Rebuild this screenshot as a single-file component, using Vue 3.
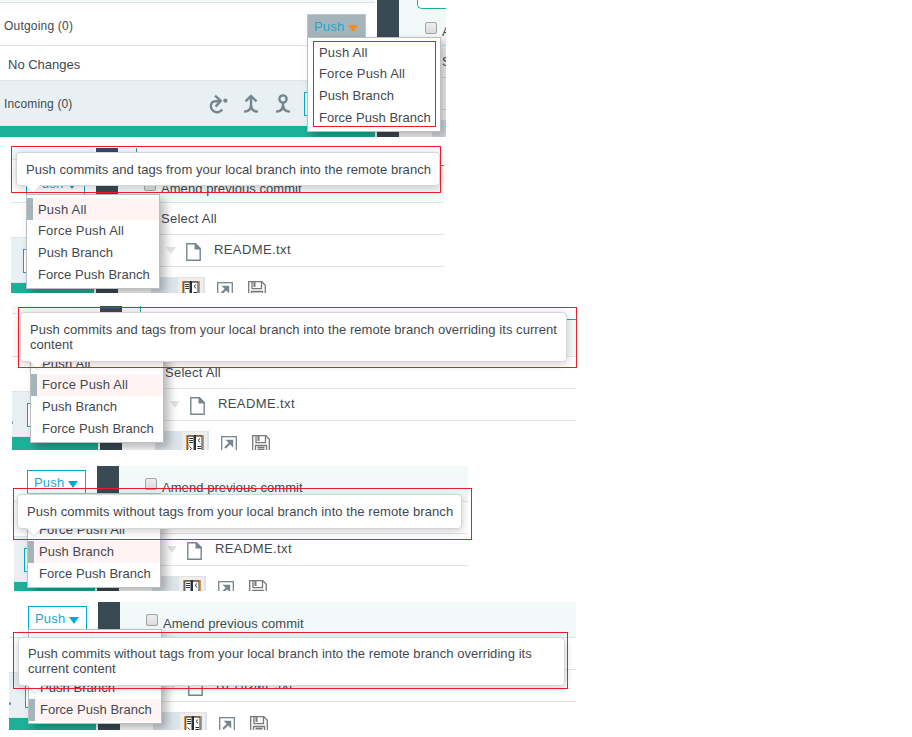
<script setup>
const items = ['Push All', 'Force Push All', 'Push Branch', 'Force Push Branch']
const panels = [
  { id: 1, active: -1, open: true, lines: [] },
  { id: 2, active: 0, lines: ['Push commits and tags from your local branch into the remote branch'] },
  { id: 3, active: 1, lines: ['Push commits and tags from your local branch into the remote branch overriding its current', 'content'] },
  { id: 4, active: 2, lines: ['Push commits without tags from your local branch into the remote branch'] },
  { id: 5, active: 3, lines: ['Push commits without tags from your local branch into the remote branch overriding its', 'current content'] },
]
</script>

<template>
  <main class="board">
    <section v-for="p in panels" :key="p.id" class="panel" :class="'p' + p.id">
      <div class="window">
        <div class="scene">
          <div class="left">
            <div class="strip"></div>
            <div class="row outgoing">
              <span class="small">Outgoing (0)</span>
              <button class="push" :class="{ open: p.open }"><span>Push</span><i class="caret"></i></button>
            </div>
            <div class="row none">No Changes</div>
            <div class="row incoming">
              <span class="small">Incoming (0)</span>
              <div class="tools">
                <svg width="20" height="20" viewBox="0 0 20 20" fill="none" stroke="#76868e" stroke-width="2.4"><path d="M14.2 15.4A6.1 6.1 0 1 1 3.8 8.8C5.6 6.6 9 7 13 7M7 1.6L12.8 6.8L7.6 12.6"/><circle cx="17.4" cy="6.7" r="2.1" fill="#76868e" stroke="none"/></svg>
                <svg width="16" height="20" viewBox="0 0 16 20" fill="none" stroke="#76868e" stroke-width="2.4"><path d="M8 2V12M8 10.5C8 15.5 6 17.6 1 17.6M8 10.5C8 15.5 10 17.6 15 17.6M2.5 7.4L8 2L13.5 7.4"/></svg>
                <svg width="16" height="20" viewBox="0 0 16 20" fill="none" stroke="#76868e" stroke-width="2.4"><circle cx="8" cy="5" r="3.6"/><path d="M8 8.5V12M8 10.5C8 15.5 6 17.6 1 17.6M8 10.5C8 15.5 10 17.6 15 17.6"/></svg>
              </div>
              <div class="pull"></div>
            </div>
            <div class="bar"></div>
          </div>
          <div class="splitter"></div>
          <div class="right">
            <div class="commit">
              <div class="message"></div>
              <label class="amend"><span class="check"></span><span>Amend previous commit</span></label>
            </div>
            <div class="line select">Select All</div>
            <div class="line file">
              <i class="twist"></i>
              <svg width="15" height="18" viewBox="0 0 15 18" fill="none" stroke="#76868e" stroke-width="1.4"><path d="M.8 .8H9.4L14.2 5.6V17.2H.8Z"/><path d="M9.2 .8V5.8H14.2Z" fill="#76868e"/></svg>
              <span>README.txt</span>
            </div>
            <div class="actions">
              <div class="mode">
                <div class="compare">
                  <svg width="18" height="18" viewBox="0 0 18 18" fill="none"><rect x=".7" y=".7" width="16.6" height="16.6" fill="#fff" stroke="#d9892e" stroke-width="1.2"/><path d="M1.8 17.5V1H8V17.5M10 1H16V17.5" stroke="#27313b" stroke-width="1"/><path d="M9 0V18" stroke="#27313b" stroke-width="2"/><path d="M3.2 3.5H7M3.2 5.5H7M3.2 7.5H7M11.4 11.5H15M11.4 13.5H15M11.4 15.5H15" stroke="#27313b" stroke-width="1"/><path d="M14.2 3.4L12 5.4L14.2 7.4M3.6 11.5L5.6 13.5L3.6 15.5" stroke="#27313b"/></svg>
                </div>
              </div>
              <svg class="export" width="16" height="16" viewBox="0 0 16 16" fill="none" stroke="#76868e"><rect x=".7" y=".7" width="14.6" height="14.6" stroke-width="1.3"/><path d="M4.5 3.8H12.2V11.5Z" fill="#76868e" stroke="none"/><path d="M10 6L4 12" stroke-width="2.2"/></svg>
              <svg class="save" width="18" height="18" viewBox="0 0 18 18" fill="none" stroke="#76787a" stroke-width="1.3"><path d="M.7 .7H13.8L17.3 4.2V17.3H.7Z"/><path d="M4 .7V7.6H13.5V.7M3.5 17V10.5H14.5V17M5.5 12.5H12.5M5.5 14.5H12.5"/><path d="M6.5 1V6" stroke-width="2"/></svg>
            </div>
          </div>
          <ul class="menu">
            <li v-for="(t, i) in items" :key="t" :class="['m' + i, { active: p.active === i }]">{{ t }}</li>
          </ul>
        </div>
      </div>
      <div v-if="p.lines.length" class="tip"><div v-for="l in p.lines" :key="l">{{ l }}</div><i class="pointer"></i></div>
      <div class="mark"></div>
    </section>
  </main>
</template>

<style>
body { background: #fff; }
</style>

<style scoped>
* { box-sizing: border-box; }
.board { width: 912px; height: 737px; overflow: hidden; font: 13px/15px "Liberation Sans", Arial, sans-serif; color: #42484f; background: #fff; }
.panel { position: relative; }
.p1 { width: 446px; height: 137px; }
.p2 { width: 433px; height: 145px; margin: 11px 0 0 11px; }
.p3 { width: 564px; height: 144px; margin: 13px 0 0 12px; }
.p4 { width: 454px; height: 125px; margin: 16px 0 0 14px; }
.p5 { width: 567px; height: 128px; margin: 11px 0 0 9px; }
.window { width: 100%; height: 100%; display: flow-root; overflow: hidden; }
.scene { position: relative; display: flex; width: 1000px; height: 160px; }
.p1 .scene { margin: -10px 0 0 0; }
.p2 .scene { margin: -1px 0 0 -292px; }
.p3 .scene { margin: -5px 0 0 -289px; }
.p4 .scene { margin: -20px 0 0 -294px; }
.p5 .scene { margin: -20px 0 0 -288px; }

.left { width: 375px; flex: none; }
.strip { height: 13px; background: #f1faf9; border-bottom: 1px solid #dde4ea; }
.row { display: flex; border-bottom: 1px solid #dde4ea; }
.small { font-size: 12px; letter-spacing: .2px; }
.outgoing { height: 43px; padding: 11px 9px 0 4px; justify-content: space-between; align-items: flex-start; }
.outgoing .small { padding-top: 5px; }
.push { width: 59px; height: 24px; padding: 1px 0 0 6px; display: flex; align-items: center; gap: 4px; background: #fff; border: 1px solid #00a9ce; color: #1ba8cf; font: 13px/15px "Liberation Sans", Arial, sans-serif; letter-spacing: .2px; }
.caret { border: 5px solid transparent; border-top: 7px solid #00a9ce; border-bottom: 0; margin-top: 3px; }
.push.open { background: #a5b4bb; border-color: #bcc6ca; }
.push.open .caret { border-top-color: #f58a1f; }
.none { height: 35px; padding: 11px 0 0 8px; }
.incoming { height: 45px; background: #e8f0f3; padding-left: 4px; align-items: flex-start; }
.incoming .small { width: 204px; padding-top: 16px; letter-spacing: .15px; }
.tools { display: flex; gap: 16px; width: 96px; padding-top: 13px; }
.tools svg { flex: none; }
.tools svg + svg { margin-left: -1px; }
.tools svg + svg + svg { margin-left: 0; }
.pull { width: 60px; height: 24px; margin-top: 11px; border: 1px solid #00a9ce; background: #fff; flex: none; }
.bar { height: 30px; background: #1bb199; }
.splitter { width: 22px; margin-left: 2px; background: #3a4a53; flex: none; }

.right { flex: 1; }
.commit { height: 56px; background: #f1faf9; border-bottom: 1px solid #dde4ea; padding-left: 18px; }
.message { height: 19px; border: 1px solid #1bb199; border-top: 0; border-right: 0; border-radius: 0 0 0 5px; background: #fff; }
.amend { display: flex; gap: 5px; padding: 13px 0 0 8px; }
.check { width: 12px; height: 12px; border: 1px solid #a3a3a3; border-radius: 2px; background: linear-gradient(#ededed, #dcdcdc); }
.amend span + span { padding-top: 2px; letter-spacing: .06px; }
.line { height: 32px; border-bottom: 1px solid #dde4ea; }
.select { padding: 8px 0 0 43px; letter-spacing: .25px; }
.file { display: flex; padding: 8px 0 0 48px; }
.twist { margin-top: 4px; border: 5px solid transparent; border-top: 7px solid #e3e3e3; border-bottom: 0; height: 7px; }
.file svg { margin-left: 10px; }
.file span { margin: -1px 0 0 13px; letter-spacing: .4px; }
.actions { display: flex; padding: 10px 0 0 33px; }
.mode { width: 54px; height: 30px; padding-left: 26px; background: #dde5ec; }
.compare { width: 27px; height: 30px; padding: 3px 4px; background: #eee; border: 1px solid #e2e2e2; border-bottom: 0; }
.compare svg { display: block; }
.export { margin: 5px 0 0 12px; }
.save { margin: 4px 0 0 15px; }

.menu { position: absolute; left: 307px; top: 47px; width: 134px; height: 95px; margin: 0; padding: 3px 0; list-style: none; background: #fff; border: 1px solid #bcbfc1; box-shadow: 5px 5px 9px rgba(0, 0, 0, .28); }
.menu li { height: 22px; padding: 3.5px 0 0 11px; }
.menu .m0 { height: 21.5px; letter-spacing: .2px; }
.menu .m1 { letter-spacing: .16px; }
.menu .m2 { letter-spacing: .05px; }
.menu .m3 { letter-spacing: .03px; }
.menu li.active { background: #fff4f3; box-shadow: inset 6px 0 #a5b4bb; }

.tip { position: absolute; background: #fff; border: 1px solid #d4d6da; border-radius: 4px; padding: 9px; box-shadow: 0 2px 10px rgba(0, 0, 0, .2); white-space: nowrap; letter-spacing: .06px; }
.p2 .tip { left: 5px; top: 4px; width: 424px; height: 34px; }
.p3 .tip { left: 8px; top: 6px; width: 547px; height: 50px; letter-spacing: .05px; }
.p4 .tip { left: 3px; top: 28px; width: 445px; height: 35px; letter-spacing: .08px; }
.p5 .tip { left: 9px; top: 35px; width: 547px; height: 49px; padding-top: 8px; letter-spacing: .07px; }
.pointer { position: absolute; left: 9px; top: 100%; border: 7px solid transparent; border-top: 8px solid #fff; border-bottom: 0; filter: drop-shadow(0 1px 0 #d8dadd); }
.mark { position: absolute; border: 1px solid #ed1c24; }
.p1 .mark { left: 313px; top: 41px; width: 123px; height: 86px; }
.p2 .mark { left: 0; top: -2px; width: 430px; height: 47px; }
.p3 .mark { left: 6px; top: 1px; width: 559px; height: 61px; }
.p4 .mark { left: -1px; top: 22px; width: 459px; height: 52px; }
.p5 .mark { left: 4px; top: 30px; width: 555px; height: 57px; }
</style>
